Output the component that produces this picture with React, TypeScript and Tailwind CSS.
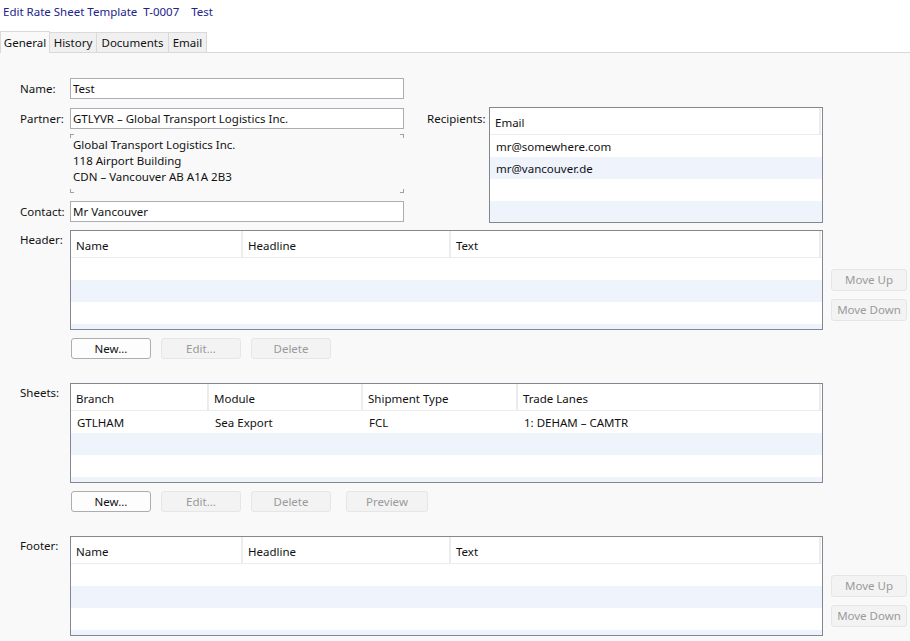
import React from "react";

type Col = { label: string; w?: number };

function Table({
  cols,
  rows,
  height,
  width,
  rowCount,
}: {
  cols: Col[];
  rows: string[][];
  height: string;
  width: string;
  rowCount: number;
}) {
  const list = Array.from({ length: rowCount }, (_, i) => rows[i] || []);
  return (
    <div className={`${width} ${height} border border-[#828790] bg-white overflow-hidden`}>
      <div className="flex h-[27px] border-b border-[#ececec] pr-[1px]">
        {cols.map((c, i) => (
          <div
            key={i}
            className={`flex items-center pt-[3px] px-[5px] border-r-2 border-[#ececec] ${c.w ? "" : "flex-1"}`}
            style={c.w ? { width: c.w } : undefined}
          >
            {c.label}
          </div>
        ))}
      </div>
      {list.map((r, i) => (
        <div key={i} className={`flex h-[22px] items-center pt-[1px] ${i % 2 === 1 ? "bg-[#eef3fc]" : "bg-white"}`}>
          {cols.map((c, j) => (
            <div
              key={j}
              className={`px-[6px] ${c.w ? "" : "flex-1"}`}
              style={c.w ? { width: c.w } : undefined}
            >
              {r[j] || ""}
            </div>
          ))}
        </div>
      ))}
    </div>
  );
}

function Btn({ children, enabled, className = "" }: { children: React.ReactNode; enabled?: boolean; className?: string }) {
  return (
    <div
      className={`flex items-center justify-center h-[21px] rounded-[3px] border ${
        enabled ? "bg-[#fdfdfd] border-[#adadad] text-[#111]" : "bg-[#f3f3f3] border-[#e6e6e6] text-[#9a9a9a]"
      } ${className}`}
    >
      {children}
    </div>
  );
}

function Input({ value }: { value: string }) {
  return (
    <div className="w-[334px] h-[21px] border border-[#abadb3] bg-white flex items-center px-[2px] text-[#111]">
      {value}
    </div>
  );
}

function MoveButtons() {
  return (
    <div className="flex flex-col ml-[8px] pt-[39px] gap-[8px]">
      <Btn className="w-[76px] h-[22px]">Move Up</Btn>
      <Btn className="w-[76px] h-[22px]">Move Down</Btn>
    </div>
  );
}

const hfCols: Col[] = [
  { label: "Name", w: 172 },
  { label: "Headline", w: 208 },
  { label: "Text" },
];

export default function App() {
  return (
    <div className="w-[910px] h-[641px] overflow-hidden bg-[#f9f9f9] text-[11.5px] leading-[16px] text-[#111] font-['Noto_Sans',sans-serif] flex flex-col">
      <div className="bg-white h-[31px] flex flex-col">
        <div className="px-[3px] pt-[4px] text-[#23238a] whitespace-pre">Edit Rate Sheet Template  T-0007    Test</div>
      </div>
      <div className="bg-white h-[22px] flex items-end border-b border-[#d9d9d9] relative">
        <div className="w-[50px] h-[22px] bg-[#f9f9f9] border border-b-0 border-[#d9d9d9] flex items-center justify-center mb-[-1px] z-10">General</div>
        <div className="w-[47px] h-[20px] bg-[#f0f0f0] border border-l-0 border-b-0 border-[#d9d9d9] flex items-center justify-center">History</div>
        <div className="w-[72px] h-[20px] bg-[#f0f0f0] border border-l-0 border-b-0 border-[#d9d9d9] flex items-center justify-center">Documents</div>
        <div className="w-[38px] h-[20px] bg-[#f0f0f0] border border-l-0 border-b-0 border-[#d9d9d9] flex items-center justify-center">Email</div>
      </div>

      <div className="pl-[20px] pt-[25px] flex flex-col">
        {/* top section */}
        <div className="flex">
          <div className="flex flex-col">
            <div className="flex items-center">
              <div className="w-[50px]">Name:</div>
              <Input value="Test" />
            </div>
            <div className="flex items-center mt-[9px]">
              <div className="w-[50px]">Partner:</div>
              <Input value="GTLYVR – Global Transport Logistics Inc." />
            </div>
            <div className="flex mt-[5px]">
              <div className="w-[50px]" />
              <div className="relative w-[334px] h-[59px] pl-[3px] pt-[3px] text-[#111]">
                <span className="absolute left-0 top-0 w-[4px] h-[4px] border-l border-t border-[#a0a0a0]" />
                <span className="absolute right-0 top-0 w-[4px] h-[4px] border-r border-t border-[#a0a0a0]" />
                <span className="absolute left-0 bottom-0 w-[4px] h-[4px] border-l border-b border-[#a0a0a0]" />
                <span className="absolute right-0 bottom-0 w-[4px] h-[4px] border-r border-b border-[#a0a0a0]" />
                <div>Global Transport Logistics Inc.</div>
                <div>118 Airport Building</div>
                <div>CDN – Vancouver AB A1A 2B3</div>
              </div>
            </div>
            <div className="flex items-center mt-[8px]">
              <div className="w-[50px]">Contact:</div>
              <Input value="Mr Vancouver" />
            </div>
          </div>
          <div className="flex ml-[23px] mt-[29px]">
            <div className="w-[62px] pt-[4px]">Recipients:</div>
            <Table
              cols={[{ label: "Email" }]}
              rows={[["mr@somewhere.com"], ["mr@vancouver.de"]]}
              height="h-[116px]"
              width="w-[334px]"
              rowCount={4}
            />
          </div>
        </div>

        {/* Header */}
        <div className="flex mt-[7px]">
          <div className="w-[50px] pt-[2px]">Header:</div>
          <div className="flex flex-col">
            <Table cols={hfCols} rows={[]} height="h-[100px]" width="w-[753px]" rowCount={4} />
            <div className="flex gap-[10px] mt-[8px] ml-[1px]">
              <Btn enabled className="w-[80px]">New...</Btn>
              <Btn className="w-[80px]">Edit...</Btn>
              <Btn className="w-[80px]">Delete</Btn>
            </div>
          </div>
          <MoveButtons />
        </div>

        {/* Sheets */}
        <div className="flex mt-[24px]">
          <div className="w-[50px] pt-[2px]">Sheets:</div>
          <div className="flex flex-col">
            <Table
              cols={[
                { label: "Branch", w: 138 },
                { label: "Module", w: 154 },
                { label: "Shipment Type", w: 155 },
                { label: "Trade Lanes" },
              ]}
              rows={[["GTLHAM", "Sea Export", "FCL", "1: DEHAM – CAMTR"]]}
              height="h-[100px]"
              width="w-[753px]"
              rowCount={4}
            />
            <div className="flex gap-[10px] mt-[8px] ml-[1px]">
              <Btn enabled className="w-[80px]">New...</Btn>
              <Btn className="w-[80px]">Edit...</Btn>
              <Btn className="w-[80px]">Delete</Btn>
              <Btn className="w-[82px] ml-[5px]">Preview</Btn>
            </div>
          </div>
        </div>

        {/* Footer */}
        <div className="flex mt-[24px]">
          <div className="w-[50px] pt-[2px]">Footer:</div>
          <div className="flex flex-col">
            <Table cols={hfCols} rows={[]} height="h-[100px]" width="w-[753px]" rowCount={4} />
          </div>
          <MoveButtons />
        </div>
      </div>
    </div>
  );
}
